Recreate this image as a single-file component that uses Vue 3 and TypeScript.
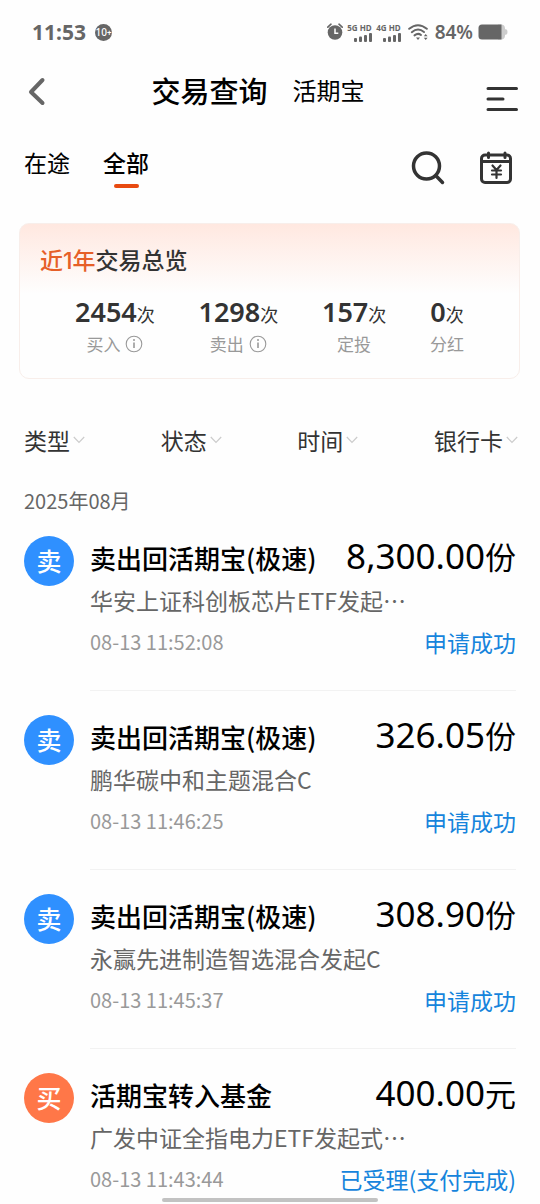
<script setup lang="ts">
import { ref } from 'vue'

interface Stat {
  count: number
  label: string
  info: boolean
}

interface Trade {
  kind: 'sell' | 'buy'
  title: string
  amount: string
  unit: string
  fund: string
  time: string
  status: string
}

const tabs: string[] = ['在途', '全部']
const activeTab = ref<string>('全部')

const stats: Stat[] = [
  { count: 2454, label: '买入', info: true },
  { count: 1298, label: '卖出', info: true },
  { count: 157, label: '定投', info: false },
  { count: 0, label: '分红', info: false },
]

const filters: string[] = ['类型', '状态', '时间', '银行卡']

const trades: Trade[] = [
  { kind: 'sell', title: '卖出回活期宝(极速)', amount: '8,300.00', unit: '份', fund: '华安上证科创板芯片ETF发起⋯', time: '08-13 11:52:08', status: '申请成功' },
  { kind: 'sell', title: '卖出回活期宝(极速)', amount: '326.05', unit: '份', fund: '鹏华碳中和主题混合C', time: '08-13 11:46:25', status: '申请成功' },
  { kind: 'sell', title: '卖出回活期宝(极速)', amount: '308.90', unit: '份', fund: '永赢先进制造智选混合发起C', time: '08-13 11:45:37', status: '申请成功' },
  { kind: 'buy', title: '活期宝转入基金', amount: '400.00', unit: '元', fund: '广发中证全指电力ETF发起式⋯', time: '08-13 11:43:44', status: '已受理(支付完成)' },
]
</script>

<template>
  <div class="page">
    <div class="statusbar">
      <span class="clock">11:53</span>
      <span class="badge">10<i>+</i></span>
      <div class="system">
        <svg width="16" height="18" viewBox="0 0 16 18">
          <circle cx="8" cy="9.5" r="7.3" fill="#666" />
          <path d="M0.8 4.2 4 1.2M15.2 4.2 12 1.2" stroke="#666" stroke-width="1.6" stroke-linecap="round" />
          <path d="M8 5.5v4.7h3.3" fill="none" stroke="#fff" stroke-width="1.5" />
        </svg>
        <span v-for="net in ['5G HD', '4G HD']" :key="net" class="net">
          <span>{{ net }}</span>
          <svg width="18" height="9" viewBox="0 0 18 9" fill="#666">
            <rect x="0" y="5" width="3" height="4" rx="1" />
            <rect x="5" y="3.5" width="3" height="5.5" rx="1" />
            <rect x="10" y="2" width="3" height="7" rx="1" />
            <rect x="15" y="0" width="3" height="9" rx="1" />
          </svg>
        </span>
        <svg class="wifi" width="20" height="17" viewBox="0 0 20 17" fill="none" stroke="#666" stroke-width="2" stroke-linecap="round">
          <path d="M1.2 4.8Q10-2.4 18.8 4.8" />
          <path d="M3.8 8.2Q10 3 16 8" />
          <path d="M6.5 11.4Q10 8.6 13 11" />
          <path d="M8 13.5h4l-2 2.4z" fill="#666" stroke="none" />
          <path d="M15.8 12.3 17.7 10l1.9 2.3zM15.8 13.7l1.9 2.3 1.9-2.3z" fill="#666" stroke="none" />
        </svg>
        <span class="percent">84%</span>
        <svg class="battery" width="30" height="16" viewBox="0 0 30 16">
          <path d="M20 0.5h3q4 0 4 4v.8h1q1.5 0 1.5 2.7t-1.5 2.7h-1v.8q0 4-4 4h-3z" fill="#ccc" />
          <path d="M4 0.5h19.5v15H4q-3.5 0-3.5-3.5V4q0-3.5 3.5-3.5z" fill="#666" />
        </svg>
      </div>
    </div>

    <header class="header">
      <button class="icon-btn" aria-label="返回">
        <svg width="24" height="30" viewBox="0 0 24 30" fill="none" stroke="#666" stroke-width="4" stroke-linecap="round" stroke-linejoin="round">
          <path d="M18.5 4 7 16 18.5 27" />
        </svg>
      </button>
      <div class="titles">
        <h1>交易查询</h1>
        <a href="#">活期宝</a>
      </div>
      <button class="icon-btn menu" aria-label="菜单">
        <svg width="32" height="26" viewBox="0 0 32 26" fill="none" stroke="#333" stroke-width="3" stroke-linecap="round">
          <path d="M2 2.5H30.5M2 13H17M2 23.5H30.5" />
        </svg>
      </button>
    </header>

    <nav class="tabs">
      <button v-for="tab in tabs" :key="tab" class="tab" :class="{ active: tab === activeTab }" @click="activeTab = tab">
        {{ tab }}
      </button>
      <div class="tools">
        <button class="icon-btn" aria-label="搜索">
          <svg width="34" height="34" viewBox="0 0 34 34" fill="none" stroke="#333" stroke-width="3.5" stroke-linecap="round">
            <circle cx="15.5" cy="15" r="13" />
            <path d="M25.2 25 31.5 31.5" />
          </svg>
        </button>
        <button class="icon-btn" aria-label="交易日历">
          <svg width="34" height="34" viewBox="0 0 34 34" fill="none" stroke="#333" stroke-width="3" stroke-linecap="round" stroke-linejoin="round">
            <rect x="2.5" y="4" width="29" height="27.5" rx="3.5" />
            <path d="M3 10.5H31M9.5 2V6.5M26 2V6.5" />
            <path d="M13.5 14.5 17.5 19 21.5 14.5M17.5 19v8M13 19.5h9M13 23.5h9" stroke-width="2.2" />
          </svg>
        </button>
      </div>
    </nav>

    <section class="card">
      <h2><em>近1年</em>交易总览</h2>
      <div class="stats">
        <div v-for="stat in stats" :key="stat.label" class="stat">
          <div class="count">{{ stat.count }}<small>次</small></div>
          <div class="label">
            {{ stat.label }}
            <svg v-if="stat.info" width="18" height="18" viewBox="0 0 18 18" fill="none" stroke="#999">
              <circle cx="9" cy="9" r="7.8" stroke-width="1.1" />
              <path d="M9 7.5v5.5" stroke-width="1.6" />
              <circle cx="9" cy="5" r="1" fill="#999" stroke="none" />
            </svg>
          </div>
        </div>
      </div>
    </section>

    <div class="filters">
      <button v-for="name in filters" :key="name" class="filter">
        {{ name }}
        <svg width="12" height="8" viewBox="0 0 12 8" fill="none" stroke="#ccc" stroke-width="1.2">
          <path d="M0.8 1 6 6.5 11.2 1" />
        </svg>
      </button>
    </div>

    <h3 class="month">2025年08月</h3>

    <ul class="list">
      <li v-for="trade in trades" :key="trade.time" class="row">
        <span class="avatar" :class="trade.kind">{{ trade.kind === 'sell' ? '卖' : '买' }}</span>
        <div class="body">
          <div class="line top">
            <strong>{{ trade.title }}</strong>
            <span class="amount">{{ trade.amount }}<small>{{ trade.unit }}</small></span>
          </div>
          <div class="line fund">{{ trade.fund }}</div>
          <div class="line">
            <time>{{ trade.time }}</time>
            <span class="status">{{ trade.status }}</span>
          </div>
        </div>
      </li>
    </ul>

    <div class="home-indicator"></div>
  </div>
</template>

<style>
body {
  background: #fefefe;
}
</style>

<style scoped>
.page {
  position: relative;
  height: 100vh;
  overflow: hidden;
  background: #fefefe;
  color: #000;
  font-family: "Noto Sans CJK SC", "Noto Sans", sans-serif;
}

.page * {
  box-sizing: border-box;
}

button {
  margin: 0;
  padding: 0;
  border: 0;
  background: none;
  color: inherit;
  font: inherit;
  cursor: pointer;
}

svg {
  display: block;
  flex: none;
}

h1,
h2,
h3 {
  margin: 0;
}

.statusbar {
  display: flex;
  align-items: center;
  height: 64px;
  padding: 0 32px;
  color: #666;
  font-family: "Noto Sans", sans-serif;
  font-weight: 700;
}

.clock {
  font-size: 21px;
}

.badge {
  display: flex;
  align-items: center;
  justify-content: center;
  width: 17px;
  height: 17px;
  margin-left: 9px;
  border-radius: 50%;
  background: #666;
  color: #fff;
  font-size: 10px;
  font-weight: 500;
  line-height: 17px;
}

.badge i {
  font-size: 8px;
  font-style: normal;
  font-weight: 700;
}

.system {
  display: flex;
  align-items: center;
  margin-left: auto;
}

.net {
  display: flex;
  flex-direction: column;
  align-items: flex-end;
  gap: 1px;
  width: 25px;
  margin-left: 4px;
  font-size: 8px;
  line-height: 9px;
  white-space: nowrap;
}

.wifi {
  margin-left: 7px;
}

.percent {
  margin-left: 7px;
  font-size: 19px;
  font-weight: 600;
}

.battery {
  margin-left: 5px;
}

.header {
  display: flex;
  align-items: center;
  justify-content: space-between;
  height: 54px;
  padding: 0 22px 0 24px;
}

.icon-btn {
  display: flex;
  align-items: center;
}

.titles {
  display: flex;
  align-items: center;
  gap: 25px;
  padding-bottom: 2px;
}

.titles h1 {
  font-size: 29px;
  font-weight: 500;
  line-height: 50px;
}

.titles a {
  color: #000;
  font-size: 24px;
  line-height: 50px;
  text-decoration: none;
}

.menu {
  align-self: flex-end;
  height: 38px;
  padding-left: 18px;
}

.tabs {
  display: flex;
  gap: 33px;
  height: 50px;
  margin-top: 25px;
  padding: 0 27px 0 24px;
}

.tab {
  display: flex;
  flex-direction: column;
  align-items: center;
  font-size: 23px;
  line-height: 38px;
}

.tab.active {
  font-weight: 500;
}

.tab.active::after {
  content: "";
  width: 25px;
  height: 4px;
  margin-top: 3px;
  border-radius: 2px;
  background: #e84a10;
}

.tools {
  display: flex;
  gap: 34px;
  margin-left: auto;
}

.card {
  margin: 30px 20px 0 19px;
  padding: 20px 20px 22px;
  border: 1px solid #f8eeea;
  border-radius: 10px;
  background: linear-gradient(#ffe8e0, #fefefe 70px);
}

.card h2 {
  color: #333;
  font-family: Inter, "Noto Sans CJK SC", sans-serif;
  font-size: 23px;
  font-weight: 500;
  line-height: 34px;
}

.card em {
  color: #e65f28;
  font-style: normal;
}

.stats {
  display: flex;
  justify-content: space-between;
  margin-top: 17px;
  padding: 0 35px;
}

.count {
  color: #333;
  font-family: "Noto Sans", "Noto Sans CJK SC", sans-serif;
  font-size: 27px;
  font-weight: 600;
  line-height: 34px;
  text-align: center;
  white-space: nowrap;
}

.count small {
  font-family: "Noto Sans CJK SC", sans-serif;
  font-size: 18px;
  font-weight: 400;
  line-height: 18px;
}

.label {
  display: flex;
  align-items: center;
  justify-content: center;
  gap: 5px;
  margin-top: 3px;
  color: #999;
  font-size: 17px;
  line-height: 24px;
}

.filters {
  display: flex;
  justify-content: space-between;
  margin-top: 44px;
  padding: 0 22px 0 24px;
}

.filter {
  display: flex;
  align-items: center;
  gap: 3px;
  color: #333;
  font-size: 23px;
  line-height: 34px;
}

.month {
  margin-top: 33px;
  padding: 0 24px;
  color: #666;
  font-size: 20px;
  font-weight: 400;
  line-height: 22px;
}

.list {
  margin: 0;
  padding: 0 24px;
  list-style: none;
}

.row {
  display: flex;
  gap: 16px;
}

.avatar {
  flex: none;
  width: 50px;
  height: 50px;
  margin-top: 24px;
  border-radius: 50%;
  color: #fff;
  font-size: 25px;
  font-weight: 500;
  line-height: 48px;
  text-align: center;
}

.avatar.sell {
  background: #2f90ff;
}

.avatar.buy {
  background: #ff7748;
}

.body {
  flex: 1;
  min-width: 0;
  padding: 24px 0 31px;
  border-bottom: 1px solid #f2f2f2;
}

.line {
  display: flex;
  align-items: center;
  justify-content: space-between;
  height: 34px;
  margin-top: 8px;
  line-height: 34px;
  white-space: nowrap;
}

.line.top {
  align-items: baseline;
  height: 41px;
  margin-top: 0;
  line-height: 40px;
}

.top strong {
  font-size: 26px;
  font-weight: 500;
}

.amount {
  font-family: "Noto Sans", "Noto Sans CJK SC", sans-serif;
  font-size: 35px;
}

.amount small {
  font-family: "Noto Sans CJK SC", sans-serif;
  font-size: 31px;
}

.line.fund {
  margin-top: 6px;
  color: #666;
  font-size: 23px;
}

time {
  color: #999;
  font-size: 20px;
}

.status {
  color: #1684dc;
  font-size: 23px;
}

.home-indicator {
  position: absolute;
  bottom: 2px;
  left: 30%;
  right: 30%;
  height: 4px;
  border-radius: 2px;
  background: #c2c2c2;
}
</style>
